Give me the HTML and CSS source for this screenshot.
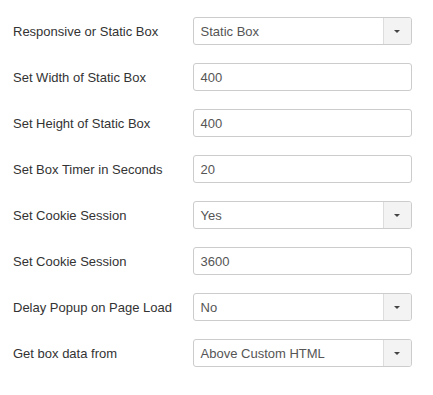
FILE: index.html
```html
<!DOCTYPE html>
<html lang="en">
<head>
  <meta charset="UTF-8">
  <title>Box Settings</title>
  <link rel="stylesheet" href="styles.css">
</head>
<body>
  <form class="settings">
    <div class="row">
      <label>Responsive or Static Box</label>
      <div class="select"><span>Static Box</span><b class="caret"></b></div>
    </div>
    <div class="row">
      <label>Set Width of Static Box</label>
      <div class="input">400</div>
    </div>
    <div class="row">
      <label>Set Height of Static Box</label>
      <div class="input">400</div>
    </div>
    <div class="row">
      <label>Set Box Timer in Seconds</label>
      <div class="input">20</div>
    </div>
    <div class="row">
      <label>Set Cookie Session</label>
      <div class="select"><span>Yes</span><b class="caret"></b></div>
    </div>
    <div class="row">
      <label>Set Cookie Session</label>
      <div class="input">3600</div>
    </div>
    <div class="row">
      <label>Delay Popup on Page Load</label>
      <div class="select"><span>No</span><b class="caret"></b></div>
    </div>
    <div class="row">
      <label>Get box data from</label>
      <div class="select"><span>Above Custom HTML</span><b class="caret"></b></div>
    </div>
  </form>
</body>
</html>
```

FILE: styles.css
```css
body {
  margin: 0;
  background: #fff;
  font-family: "Liberation Sans", Arial, sans-serif;
  font-size: 13px;
  color: #333;
}
.settings {
  padding: 17px 21px 0 13px;
  display: flex;
  flex-direction: column;
  gap: 18px;
}
.row {
  display: flex;
  align-items: center;
  height: 28px;
}
.row label {
  width: 180px;
}
.input, .select {
  box-sizing: border-box;
  width: 220px;
  height: 28px;
  border: 1px solid #ccc;
  border-radius: 3px;
  padding: 0 7px;
  display: flex;
  align-items: center;
  color: #555;
}
.select {
  padding-right: 0;
  justify-content: space-between;
}
.caret {
  width: 27px;
  height: 26px;
  border-left: 1px solid #ddd;
  background: #f3f3f3;
  border-radius: 0 2px 2px 0;
  position: relative;
}
.caret::after {
  content: "";
  position: absolute;
  left: 10px;
  top: 12px;
  border-left: 3px solid transparent;
  border-right: 3px solid transparent;
  border-top: 3px solid #444;
}
```
